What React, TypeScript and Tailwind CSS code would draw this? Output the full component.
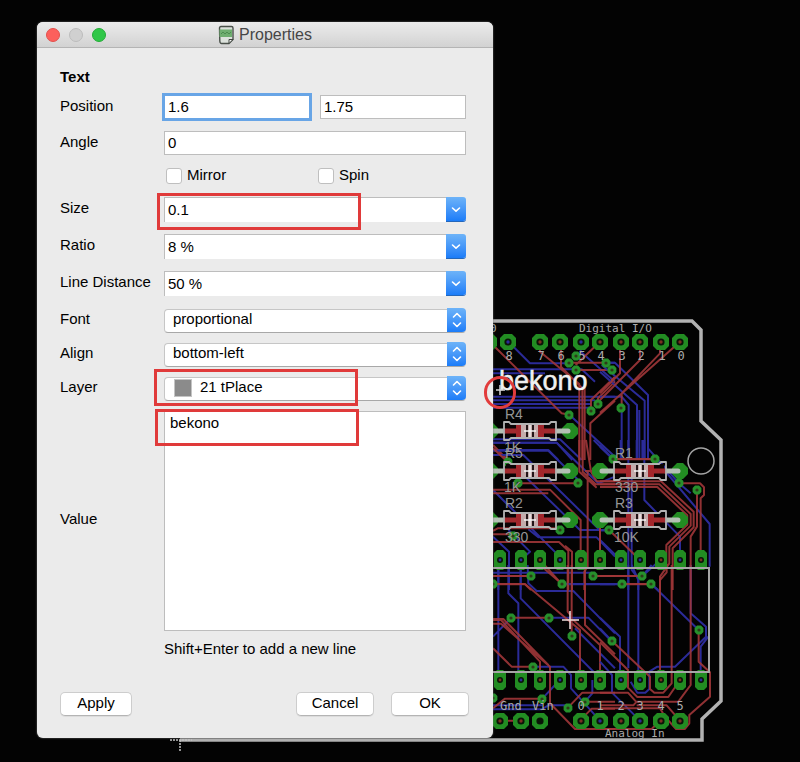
import React from "react";

const RED = "#a03638";
const BLUE = "#2b2b98";
const GREEN = "#228c22";
const SILK = "#969696";

type Sheet = { x: number; y: number; red: string; blue: string };

// Traces are stored per board section, in thirds of a pixel.
const sheets: Sheet[] = [
  {
    x: 485,
    y: 310,
    blue:
      "M70 95L135 160H253M24 178H290L330 215M24 190H180M24 260H390M24 271H330M24 282H318M24 293H318M287 95V125L390 215M253 314L390 440M24 388H225L290 450M24 398H215L262 450M24 420H190L220 450M372 158H390",
    red:
      "M24 105L230 310L253 314M165 95V125L283 222V450M228 95V170L292 235V450M253 158H363M273 180H383M345 95L272 165M390 200L318 270V303M390 215L339 265V283M390 272L316 340V450M299 230V450M24 405L68 450",
  },
  {
    x: 600,
    y: 310,
    blue:
      "M18 158H45L144 255V450M5 165L134 272V450M0 185L111 285V450M0 260H65L86 285V450M65 293V450M0 405L40 448M118 300V450",
    red: "M60 95V190L0 250M120 95V150L0 270M180 95V130L65 250V293M240 95L0 308M40 448H165",
  },
  {
    x: 485,
    y: 440,
    blue:
      "M24 8H215L340 130L390 110M24 32H190L290 130M24 45H115L345 271L360 271M100 90L285 270H372M24 150L224 350V360M130 268L160 292H335L390 350M24 290L72 335V450M70 270L135 335L107 360V450M326 0L383 57M40 360V450M24 398H320M231 433H390",
    red:
      "M24 25L68 66M283 0V95L335 143M293 0V95L332 133H390M303 0L318 95L335 124H390M308 95V380L298 395V450M100 130H280M24 149H195L287 240V360M24 160H190M345 93L300 93M345 241V360M24 273L38 265H210M24 283H83M24 306H222L250 332V450M240 317L261 335V450M165 360L231 433M24 408H139M24 433H120L138 450M323 408H390",
  },
  {
    x: 600,
    y: 440,
    blue:
      "M0 20L40 57M62 0V57M85 0V450M95 115V390L115 415V450M110 0V60M127 0V60M133 0V180L240 290V360M144 0V25L237 130M165 57L329 252V380M28 271L0 271M0 300L62 360M127 408L181 360M66 433H0M154 433L175 450M240 93L237 130L272 160",
    red:
      "M40 57H165M0 124H183L281 215V262L218 325V450M0 133H178L272 222V257L208 320V370L180 410V450M0 141H172L262 226V254L199 315V380M237 130H300L312 142V165L302 175V360M291 150V260L272 290V450M28 271L120 360M0 241V360M0 408H127M66 433H154",
  },
  {
    x: 485,
    y: 565,
    blue:
      "M40 0V345M70 0V85L100 115V345M107 0V100L350 345M128 0L130 55L155 78H265L390 205M193 158H310L380 229M231 57H390M24 215L79 158M145 305H235L258 330V370L345 467M172 401L224 345M24 433H170L190 421H249M24 421H172M300 410L322 385V345M270 190L390 310",
    red:
      "M24 33H139M24 57H120L285 195V345M165 0L231 57M248 0V140L256 150M260 0V212M300 0V180L390 268M265 165L345 240V345M79 158H193M24 165H48L165 290V345M24 176H48L195 305V415L270 492H390M24 162H55L190 300M24 250L80 305H145M24 430L60 401H172M45 467H107M249 428L292 383H390M285 467L320 431H390M300 410H390M323 33H390",
  },
  {
    x: 600,
    y: 565,
    blue:
      "M0 158L60 215V345M0 190L37 229M85 0V310M95 0L115 45V345M154 57L296 195M272 0V145L318 185V215L225 305H172L148 320V372L136 383H112L92 350M302 345V245L325 215M0 290L36 330V383L120 467M0 57H66M127 33L155 0M327 10V220",
    red:
      "M0 33H127M66 57H154M37 229L150 335V372L163 383H190L215 355V0M180 345V45L200 22V0M272 0V360L235 410H108L84 383H0M0 232L84 315V368L112 396H205L240 345M296 195V290L330 322V395L268 450V475L255 492H228L195 455L180 430H0M0 421H100L110 410M302 0V8M240 467L200 421H110M0 492H155L180 467",
  },
];

const vias: [number, number][] = [
  [569, 363], [606, 363], [612, 370], [576, 370], [576, 356], [569, 415], [591, 411], [598, 404],
  [621, 408], [508, 462], [518, 483], [578, 483], [560, 530], [513, 536], [609, 530], [531, 576],
  [593, 576], [562, 584], [613, 459], [655, 459], [679, 483], [697, 490], [642, 576], [622, 584],
  [651, 584], [511, 618], [549, 618], [572, 636], [533, 667], [612, 641], [542, 699], [568, 708],
  [585, 702], [493, 698], [493, 584], [699, 630],
];

const topPads = [489, 508, 540, 560, 581, 600, 621, 640, 661, 680];
const slotPads = [500, 521, 540, 560, 581, 600, 621, 640, 661, 680, 701];
const bottomPads = [500, 521, 540, 581, 600, 621, 640, 661, 680];

function RoundPad({ x, y, tint }: { x: number; y: number; tint: string }) {
  return (
    <g transform={`translate(${x} ${y})`}>
      <path d="M-4-8H4L8-4V4L4 8H-4L-8 4V-4Z" fill={GREEN} />
      <circle r="3.6" fill="#0a1408" />
      <circle r="1.7" fill={tint} />
    </g>
  );
}

function SlotPad({ x, y, tint }: { x: number; y: number; tint: string }) {
  return (
    <g transform={`translate(${x} ${y})`}>
      <path d="M-3-10H3L6-7V7L3 10H-3L-6 7V-7Z" fill={GREEN} />
      <circle r="3" fill="#0a1408" />
      <circle r="1.4" fill={tint} />
    </g>
  );
}

function Resistor({ x, y }: { x: number; y: number }) {
  return (
    <g transform={`translate(${x} ${y})`}>
      <path d="M-43-8H-37L-32-3V3L-37 8H-43L-48 3V-3ZM37-8H43L48-3V3L43 8H37L32 3V-3Z" fill={GREEN} />
      <path d="M-26 0H-38M26 0H38" stroke="#b4c0b4" strokeWidth="5" strokeLinecap="round" />
      <rect x="-24" y="-7" width="48" height="14" fill="#0c0405" />
      <path d="M-26 0H26" stroke="#a22a2e" strokeWidth="5" />
      <rect x="-14" y="-7" width="28" height="14" fill="#a3262b" />
      <rect x="-9" y="-7" width="17" height="14" fill="#c4acac" />
      <path d="M-3-6V6M3-6V6" stroke="#241618" strokeWidth="2" />
      <path d="M-6 0H6M0-6V6" stroke="#f4f4f4" strokeWidth="1.3" />
      <path
        d="M-26-9H-21L-19-7H19L21-9H26V9H21L19 7H-19L-21 9H-26Z"
        fill="none"
        stroke="#b3b3b3"
        strokeWidth="1.8"
        strokeLinejoin="round"
      />
    </g>
  );
}

function Board() {
  return (
    <svg
      className="absolute left-0 top-0 h-[762px] w-[800px]"
      viewBox="0 0 800 762"
      role="img"
      aria-label="Circuit board layout"
    >
      {sheets.map((s, i) => (
        <g
          key={i}
          transform={`translate(${s.x} ${s.y}) scale(0.3333)`}
          fill="none"
          strokeWidth="6"
          strokeLinejoin="round"
        >
          <path d={s.blue} stroke={BLUE} />
          <path d={s.red} stroke={RED} opacity="0.9" />
        </g>
      ))}
      {topPads.map((x, i) => (
        <RoundPad key={x} x={x} y={342} tint={i === 1 || i === 4 ? BLUE : "#7a3020"} />
      ))}
      {slotPads.map((x, i) => (
        <SlotPad key={x} x={x} y={560} tint={i % 3 === 0 || i === 1 || i === 7 ? BLUE : "#7a3020"} />
      ))}
      {slotPads.map((x, i) => (
        <SlotPad key={x} x={x} y={680} tint={i === 1 || i === 3 || i === 6 || i === 7 || i === 10 ? BLUE : "#7a3020"} />
      ))}
      {bottomPads.map((x, i) => (
        <RoundPad key={x} x={x} y={721} tint={i === 2 ? "#0a1408" : i === 4 || i === 6 ? BLUE : "#7a3020"} />
      ))}
      {vias.map(([x, y]) => (
        <g key={`${x}-${y}`} transform={`translate(${x} ${y})`}>
          <path d="M-2-4.400H2L4.400-2V2L2 4.400H-2L-4.400 2V-2Z" fill="#27902c" />
          <circle r="1.600" fill="#2e3a18" />
        </g>
      ))}
      <path d="M493 568H709V672H493" fill="none" stroke="#a6a6a6" strokeWidth="2" />
      <path
        d="M493 321H692L701 330V421L721 440V701L702 719V740H180"
        fill="none"
        stroke="#b2b2b2"
        strokeWidth="3.500"
      />
      <path d="M170 740H192M180 740V752" fill="none" stroke="#c4c4c4" strokeWidth="1.500" strokeDasharray="2 1" />
      <circle cx="701" cy="461" r="13" fill="none" stroke="#a4a4a4" strokeWidth="1.500" />
      <Resistor x={530} y={431} />
      <Resistor x={530} y={471} />
      <Resistor x={530} y={520} />
      <Resistor x={640} y={471} />
      <Resistor x={640} y={520} />
      <g fill={SILK} fontFamily="'Liberation Sans', Arial, sans-serif" fontSize="14">
        <text x="505" y="419">R4</text>
        <text x="504" y="452">1K</text>
        <text x="505" y="458">R5</text>
        <text x="504" y="492">1K</text>
        <text x="505" y="508">R2</text>
        <text x="505" y="542">330</text>
        <text x="615" y="458">R1</text>
        <text x="615" y="492">330</text>
        <text x="615" y="508">R3</text>
        <text x="614" y="542">10K</text>
      </g>
      <g fill="#acacac" fontFamily="'DejaVu Sans Mono', monospace" fontSize="11">
        <text x="579" y="332">Digital I/O</text>
        <text x="605" y="737">Analog In</text>
        <text x="500" y="710" fontSize="12">Gnd</text>
        <text x="532" y="710" fontSize="12">Vin</text>
        <g fontSize="12" textAnchor="middle">
          {["8", "7", "6", "5", "4", "3", "2", "1", "0"].map((n, i) => (
            <text key={n} x={topPads[i + 1] + 1} y="360">{n}</text>
          ))}
          {["0", "1", "2", "3", "4", "5"].map((n, i) => (
            <text key={n} x={bottomPads[i + 3]} y="710">{n}</text>
          ))}
        </g>
        <text x="490" y="332">0</text>
      </g>
      <text
        x="499"
        y="390"
        fill="#f0f0f0"
        stroke="#f0f0f0"
        strokeWidth="0.5"
        fontFamily="'Liberation Sans', Arial, sans-serif"
        fontSize="27"
      >
        bekono
      </text>
      <path d="M496 390H505M500 385V395" stroke="#d8d8d8" strokeWidth="1.500" />
      <path d="M562 620H579M570 611V629" stroke="#f2dede" strokeWidth="1.500" />
    </svg>
  );
}

function Chevron({ double = false }: { double?: boolean }) {
  return (
    <svg
      viewBox="0 0 20 24"
      className="h-6 w-5"
      fill="none"
      stroke="white"
      strokeWidth="1.600"
      strokeLinecap="round"
      strokeLinejoin="round"
      aria-hidden="true"
    >
      <path d={double ? "M6.500 9L10 5.500L13.500 9M6.500 15L10 18.500L13.500 15" : "M6.500 11L10 14.200L13.500 11"} />
    </svg>
  );
}

function Row({ label, htmlFor, children }: { label: string; htmlFor: string; children: React.ReactNode }) {
  return (
    <div className="grid grid-cols-[104px_1fr]">
      <label htmlFor={htmlFor} className="whitespace-nowrap leading-[22px]">{label}</label>
      <div className="relative min-w-0">{children}</div>
    </div>
  );
}

function Combo({ id, value }: { id: string; value: string }) {
  return (
    <div className="flex h-[25px]">
      <input
        id={id}
        defaultValue={value}
        className="min-w-0 flex-1 border-l border-t border-[#bdbdbd] bg-white px-[3px] outline-none"
      />
      <button
        type="button"
        aria-label={`Choose ${id}`}
        className="h-6 w-5 rounded-r-[3px] bg-gradient-to-b from-[#6db3f8] to-[#1a7cf8] shadow-[0_1px_0_#2467bb]"
      >
        <Chevron />
      </button>
    </div>
  );
}

function Popup({ id, value, swatch = false }: { id: string; value: string; swatch?: boolean }) {
  return (
    <div className="relative h-6">
      <select
        id={id}
        className={`h-6 w-full appearance-none rounded-[4px] border border-[#c6c6c6] border-b-[#a8a8a8] bg-white pb-1 leading-[18px] outline-none ${
          swatch ? "pl-[35px]" : "pl-2"
        }`}
      >
        <option>{value}</option>
      </select>
      {swatch && (
        <span className="absolute left-[10px] top-[3px] h-[18px] w-[18px] border border-[#c4c4c4] bg-[#8b8b8b]" />
      )}
      <span className="pointer-events-none absolute right-0 top-0 h-6 w-[19px] rounded-r-[4px] bg-gradient-to-b from-[#6db3f8] to-[#1a7cf8]">
        <Chevron double />
      </span>
    </div>
  );
}

const mark = "pointer-events-none absolute z-10 h-[37px] w-[204px] border-[3px] border-[#e03a3a]";
const field = "h-6 w-full min-w-0 border bg-white px-[3px] pb-[2px] outline-none";
const tick = "h-4 w-4 appearance-none rounded-[3px] border border-[#bfbfbf] bg-white";
const push =
  "h-6 rounded-[5px] border border-[#cdcdcd] border-b-[#b4b4b4] bg-white pb-[2px] leading-[18px] shadow-[0_1px_0_#dcdcdc]";

export default function App() {
  return (
    <main className="relative min-h-screen overflow-hidden bg-[#030303] pb-6 pl-[37px] pt-[22px] font-['Liberation_Sans',Arial,sans-serif] text-[15px] text-black">
      <Board />
      <section
        aria-label="Properties"
        className="relative w-full max-w-[456px] overflow-hidden rounded-[6px] bg-[#ebebeb] shadow-[0_0_2px_#777]"
      >
        <header className="relative flex h-[26px] items-center justify-center border-b border-[#b4b4b4] bg-gradient-to-b from-[#ececec] to-[#d2d2d2]">
          <div className="absolute left-[9px] flex gap-[9px]">
            <button type="button" aria-label="Close" className="h-[14px] w-[14px] rounded-full border border-[#e2504c] bg-[#fc605c]" />
            <button type="button" aria-label="Minimize" className="h-[14px] w-[14px] rounded-full border border-[#bcbcbc] bg-[#d0d0d0]" />
            <button type="button" aria-label="Zoom" className="h-[14px] w-[14px] rounded-full border border-[#24ac38] bg-[#30c748]" />
          </div>
          <div className="flex items-center gap-[5px]">
            <svg viewBox="0 0 16 20" className="h-5 w-4" aria-hidden="true">
              <path d="M3 1.500H13.500Q15 1.500 15 3V14.500L11 18.500H3.500Q2 18.500 1.800 16L1.500 3Q1.500 1.500 3 1.500Z" fill="#dce2dc" stroke="#4a504a" strokeWidth="1.400" />
              <path d="M1.500 4.500H14V12H1.500Z" fill="#6fae70" />
              <path d="M3 9L5 7L7 9L9 7L11 9L13 7" fill="none" stroke="#4c8c50" />
              <path d="M11 18.500V14.500H15Z" fill="#f4f4f4" stroke="#3f443f" />
            </svg>
            <h1 className="text-[16px] leading-5 text-[#464646]">Properties</h1>
          </div>
        </header>

        <form onSubmit={(e) => e.preventDefault()}>
          <div className="pl-[23px] pr-[27px] pt-[19px]">
            <h2 className="mb-2 font-bold leading-5">Text</h2>
            <div className="flex flex-col gap-3">
              <Row label="Position" htmlFor="x">
                <div className="grid grid-cols-2 gap-[10px]">
                  <input id="x" defaultValue="1.6" className={`${field} border-[#68a5e6] ring-2 ring-[#68a5e6]`} />
                  <input aria-label="Position Y" defaultValue="1.75" className={`${field} border-[#bdbdbd]`} />
                </div>
              </Row>
              <Row label="Angle" htmlFor="angle">
                <input id="angle" defaultValue="0" className={`${field} border-[#bdbdbd]`} />
              </Row>
            </div>
            <div className="my-[9px] ml-[104px] grid h-6 grid-cols-2 items-center gap-1 pl-[2px]">
              <div className="flex items-center gap-[5px]">
                <input id="mirror" type="checkbox" className={tick} />
                <label htmlFor="mirror" className="pb-[2px] leading-5">Mirror</label>
              </div>
              <div className="flex items-center gap-[5px]">
                <input id="spin" type="checkbox" className={tick} />
                <label htmlFor="spin" className="pb-[2px] leading-5">Spin</label>
              </div>
            </div>
            <div className="flex flex-col gap-3">
              <Row label="Size" htmlFor="size">
                <Combo id="size" value="0.1" />
                <span className={`${mark} -left-[7px] -top-1`} />
              </Row>
              <Row label="Ratio" htmlFor="ratio">
                <Combo id="ratio" value="8 %" />
              </Row>
              <Row label="Line Distance" htmlFor="distance">
                <Combo id="distance" value="50 %" />
              </Row>
            </div>
            <div className="mt-3 flex flex-col gap-[10px]">
              <Row label="Font" htmlFor="font">
                <Popup id="font" value="proportional" />
              </Row>
              <Row label="Align" htmlFor="align">
                <Popup id="align" value="bottom-left" />
              </Row>
              <Row label="Layer" htmlFor="layer">
                <Popup id="layer" value="21 tPlace" swatch />
                <span className={`${mark} -left-[10px] -top-[7px]`} />
              </Row>
            </div>
            <div className="mt-[11px] grid grid-cols-[104px_1fr] items-center">
              <label htmlFor="value" className="pb-1">Value</label>
              <div className="relative">
                <textarea
                  id="value"
                  defaultValue="bekono"
                  className="block h-[220px] w-full resize-none border border-[#bdbdbd] bg-white px-[5px] py-px leading-5 outline-none"
                />
                <span className={`${mark} -left-[9px] -top-[2px]`} />
              </div>
            </div>
            <p className="ml-[104px] mt-2 leading-5">Shift+Enter to add a new line</p>
          </div>
          <footer className="mt-[33px] flex gap-[17px] pb-[22px] pl-[23px] pr-6">
            <button type="button" className={`${push} mr-auto w-[72px]`}>Apply</button>
            <button type="button" className={`${push} w-[78px]`}>Cancel</button>
            <button type="submit" className={`${push} w-[78px]`}>OK</button>
          </footer>
        </form>
      </section>
      <span className="pointer-events-none absolute left-[484px] top-[376px] h-[33px] w-[32px] rounded-full border-[3px] border-[#e23c3c]" />
    </main>
  );
}
